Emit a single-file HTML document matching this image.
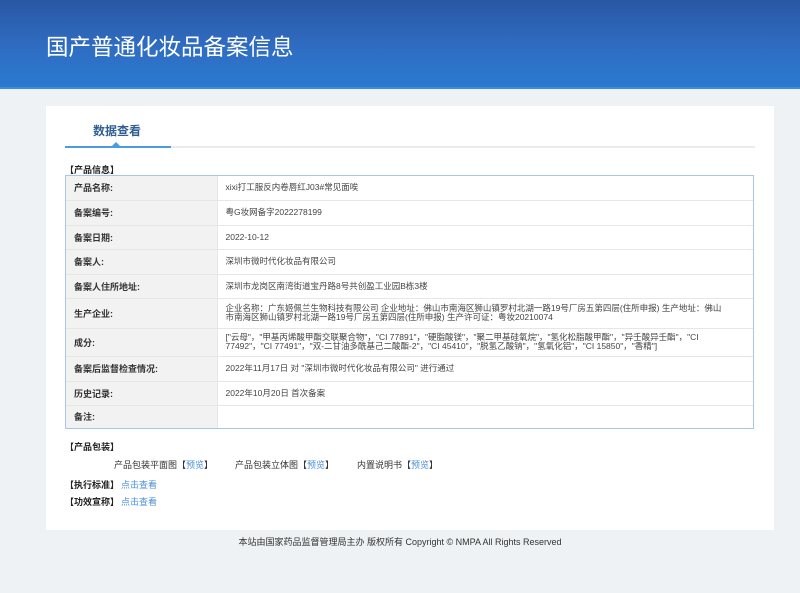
<!DOCTYPE html>
<html><head><meta charset="utf-8"><style>
*{margin:0;padding:0;box-sizing:border-box}
body{width:800px;height:593px;background:#eef2f5;font-family:"Liberation Sans","Noto Sans CJK SC",sans-serif;position:relative;overflow:hidden;color:#333}
.hd{position:absolute;left:0;top:0;width:800px;height:89px;background:linear-gradient(180deg,#2a57a4 0%,#2f6dc2 55%,#2a7ad0 100%);border-bottom:2px solid #3b8be0}
.hd h1{position:absolute;left:46px;top:30px;font-size:22.5px;font-weight:normal;color:#fff;font-family:"Noto Sans CJK SC",sans-serif}
.card{position:absolute;left:46px;top:106px;width:728px;height:424px;background:#fff}
.tab{position:absolute;left:47px;top:16px;font-size:12px;font-weight:bold;color:#2f5e95;font-family:"Noto Sans CJK SC",sans-serif}
.tl{position:absolute;left:19px;top:40px;width:690px;height:2px;background:#e8ecef}
.tb{position:absolute;left:19px;top:40px;width:106px;height:2px;background:#4a9be0}
.tri{position:absolute;left:66px;top:36px;width:0;height:0;border-left:4px solid transparent;border-right:4px solid transparent;border-bottom:4px solid #4a9be0}
.sec{position:absolute;font-size:9px;font-weight:bold;color:#222;font-family:"Noto Sans CJK SC",sans-serif}
.tw{position:absolute;left:19px;top:69px;width:689px;border:1px solid #a9c6e8}
table{width:100%;border-collapse:collapse;font-size:8.5px;font-family:"Liberation Sans","Noto Sans CJK SC",sans-serif}
td{border-bottom:1px solid #e6e6e6;vertical-align:middle}
tr:last-child td{border-bottom:none}
td.l{width:151px;background:#f2f2f2;padding-left:8px;font-weight:bold;font-size:9px;color:#333;border-right:1px solid #e6e6e6}
td.v{padding-left:8px;padding-right:30px;color:#444;line-height:9px}
.pk{position:absolute;top:352px;font-size:9px;color:#333}
.pk a,.lk{color:#4a90d9;text-decoration:none}
.ft{position:absolute;top:535px;width:800px;text-align:center;font-size:9px;color:#333}
</style></head><body>
<div class="hd"><h1>国产普通化妆品备案信息</h1></div>
<div class="card">
<div class="tab">数据查看</div>
<div class="tl"></div><div class="tb"></div><div class="tri"></div>
<div class="sec" style="left:19px;top:57px">【产品信息】</div>
<div class="tw"><table>
<tr style="height:24px"><td class="l">产品名称:</td><td class="v">xixi打工服反内卷唇红J03#常见面唉</td></tr>
<tr style="height:25px"><td class="l">备案编号:</td><td class="v">粤G妆网备字2022278199</td></tr>
<tr style="height:24px"><td class="l">备案日期:</td><td class="v">2022-10-12</td></tr>
<tr style="height:25px"><td class="l">备案人:</td><td class="v">深圳市微时代化妆品有限公司</td></tr>
<tr style="height:24px"><td class="l">备案人住所地址:</td><td class="v">深圳市龙岗区南湾街道宝丹路8号共创盈工业园B栋3楼</td></tr>
<tr style="height:30px"><td class="l">生产企业:</td><td class="v">企业名称：广东姬佩兰生物科技有限公司 企业地址：佛山市南海区狮山镇罗村北湖一路19号厂房五第四层(住所申报) 生产地址：佛山市南海区狮山镇罗村北湖一路19号厂房五第四层(住所申报) 生产许可证：粤妆20210074</td></tr>
<tr style="height:28px"><td class="l">成分:</td><td class="v" style="padding-right:20px">["云母"，"甲基丙烯酸甲酯交联聚合物"，"CI 77891"，"硬脂酸镁"，"聚二甲基硅氧烷"，"氢化松脂酸甲酯"，"异壬酸异壬酯"，"CI<br>77492"，"CI 77491"，"双-二甘油多酰基己二酸酯-2"，"CI 45410"，"脱氢乙酸钠"，"氢氧化铝"，"CI 15850"，"香精"]</td></tr>
<tr style="height:25px"><td class="l">备案后监督检查情况:</td><td class="v">2022年11月17日 对 "深圳市微时代化妆品有限公司" 进行通过</td></tr>
<tr style="height:24px"><td class="l">历史记录:</td><td class="v">2022年10月20日 首次备案</td></tr>
<tr style="height:23px"><td class="l">备注:</td><td class="v"></td></tr>
</table></div>
<div class="sec" style="left:19px;top:334px">【产品包装】</div>
<div class="pk" style="left:68px">产品包装平面图【<a>预览</a>】</div>
<div class="pk" style="left:189px">产品包装立体图【<a>预览</a>】</div>
<div class="pk" style="left:311px">内置说明书【<a>预览</a>】</div>
<div class="sec" style="left:19px;top:372px">【执行标准】 <span class="lk" style="font-weight:normal">点击查看</span></div>
<div class="sec" style="left:19px;top:389px">【功效宣称】 <span class="lk" style="font-weight:normal">点击查看</span></div>
</div>
<div class="ft">本站由国家药品监督管理局主办 版权所有 Copyright © NMPA All Rights Reserved</div>
</body></html>
